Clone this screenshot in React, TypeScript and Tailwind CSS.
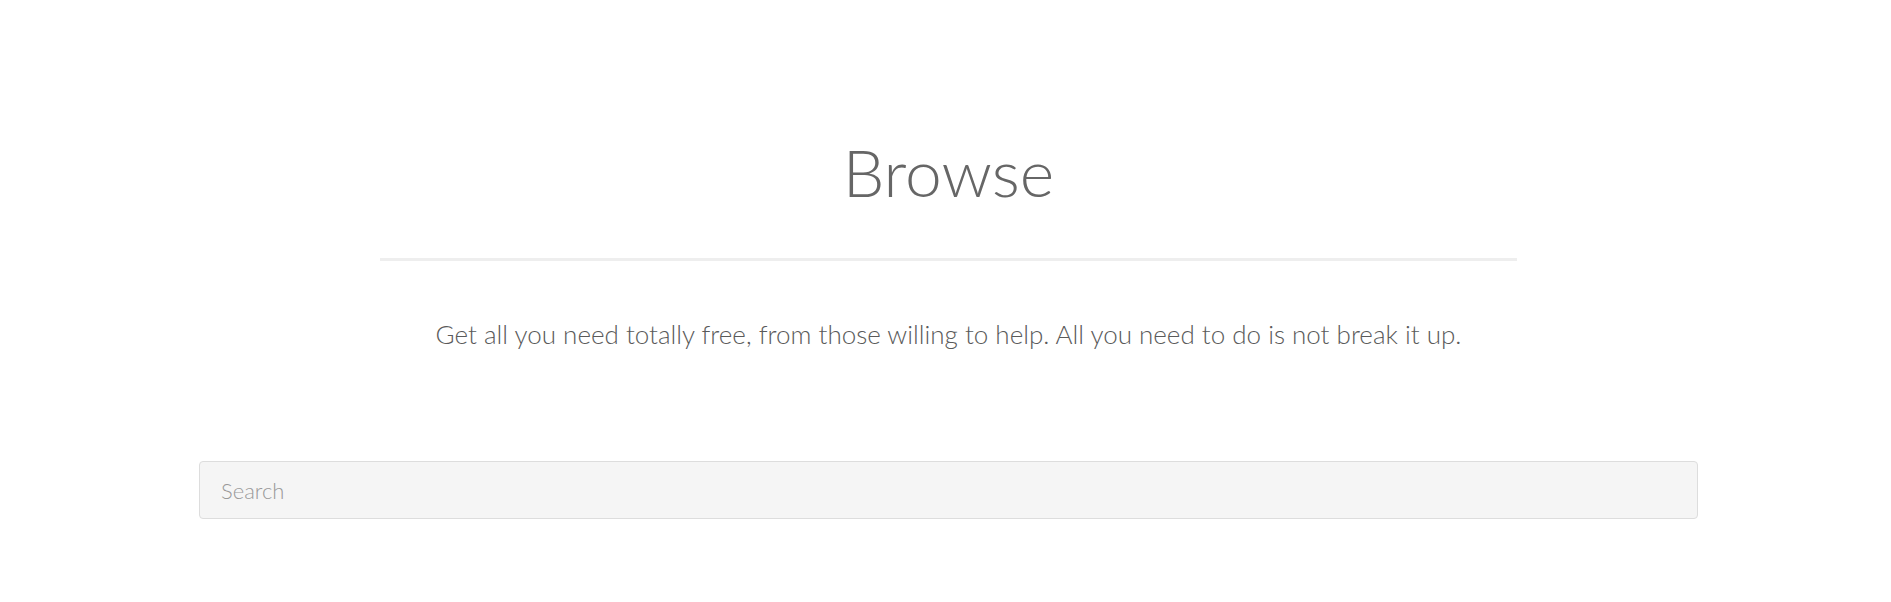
import React from 'react';

const App: React.FC = () => {
  return (
    <div className="min-h-[602px] w-full bg-white font-['Lato',sans-serif] text-[#666] pl-[199px] pr-[193px]">
      <div className="flex flex-col items-center pt-[139px]">
        <h1 className="text-[66px] font-light leading-none text-[#666]">Browse</h1>
        <div className="mt-[53px] h-[3px] w-[1137px] bg-[#eeeeee]" />
        <p className="mt-[60px] text-[26px] font-light leading-none text-[#5a5a5a]">
          Get all you need totally free, from those willing to help. All you need to do is not break it up.
        </p>
      </div>
      <div className="mt-[114px]">
        <input
          type="text"
          placeholder="Search"
          className="h-[58px] w-full rounded-[4px] border border-[#dddddd] bg-[#f5f5f5] px-[21px] text-[22px] font-light text-[#666] outline-none placeholder-[#999]"
        />
      </div>
    </div>
  );
};

export default App;
